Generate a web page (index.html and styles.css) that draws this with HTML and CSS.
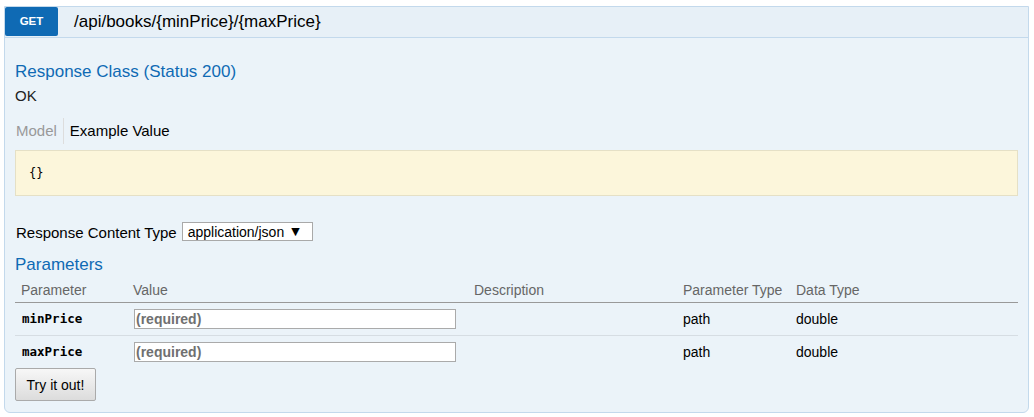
FILE: index.html
```html
<!DOCTYPE html>
<html lang="en">
<head>
<meta charset="utf-8">
<title>GET /api/books/{minPrice}/{maxPrice}</title>
<link rel="stylesheet" href="styles.css">
</head>
<body>
<div class="op">
  <div class="op-head">
    <span class="verb">GET</span>
    <span class="path">/api/books/{minPrice}/{maxPrice}</span>
  </div>
  <div class="op-body">
    <h4 class="sec-title">Response Class (Status 200)</h4>
    <div class="desc">OK</div>
    <div class="tabs">
      <span class="tab tab-off">Model</span>
      <span class="tab tab-on">Example Value</span>
    </div>
    <pre class="sample">{}</pre>
    <div class="ctype">
      <span class="ctype-label">Response Content Type</span>
      <span class="select">application/json<span class="caret">▼</span></span>
    </div>
    <h4 class="sec-title params-title">Parameters</h4>
    <table class="params">
      <colgroup>
        <col class="c1"><col class="c2"><col class="c3"><col class="c4"><col class="c5">
      </colgroup>
      <thead>
        <tr><th>Parameter</th><th>Value</th><th>Description</th><th>Parameter Type</th><th>Data Type</th></tr>
      </thead>
      <tbody>
        <tr>
          <td class="pname">minPrice</td>
          <td><input class="pinput" type="text" placeholder="(required)"></td>
          <td></td>
          <td>path</td>
          <td>double</td>
        </tr>
        <tr>
          <td class="pname">maxPrice</td>
          <td><input class="pinput" type="text" placeholder="(required)"></td>
          <td></td>
          <td>path</td>
          <td>double</td>
        </tr>
      </tbody>
    </table>
    <button class="try" type="button">Try it out!</button>
  </div>
</div>
</body>
</html>
```
FILE: styles.css
```css
html, body {
  margin: 0;
  padding: 0;
  background: #ffffff;
}
body {
  font-family: "Liberation Sans", Arial, sans-serif;
  color: #000;
}
.op {
  margin: 6px 5px 0 4px;
  border: 1px solid #c3d9ec;
  border-radius: 0 0 6px 6px;
  background: #ebf3f9;
}
.op-head {
  display: flex;
  height: 30px;
  background: #e7f0f7;
  border-bottom: 1px solid #c3d9ec;
}
.verb {
  width: 53px;
  height: 29px;
  background: #0f6ab4;
  color: #fff;
  border-radius: 2px;
  font-size: 11.5px;
  font-weight: bold;
  line-height: 29px;
  text-align: center;
}
.path {
  padding-left: 16px;
  font-size: 17px;
  line-height: 30px;
  color: #000;
}
.op-body {
  padding: 24px 10px 11px 10px;
}
.sec-title {
  margin: 0;
  font-size: 17px;
  font-weight: normal;
  line-height: 20px;
  color: #0f6ab4;
}
.desc {
  margin-top: 4px;
  font-size: 15px;
  line-height: 20px;
  color: #222;
}
.tabs {
  display: flex;
  margin-top: 12px;
  height: 26px;
}
.tab {
  font-size: 15px;
  line-height: 26px;
}
.tab-off {
  color: #999;
  padding: 0 6px 0 1px;
  border-right: 1px solid #ddd;
}
.tab-on {
  color: #000;
  padding-left: 6px;
}
.sample {
  margin: 6px 0 0;
  padding: 14px 13px;
  background: #fcf6db;
  border: 1px solid #e5e0c6;
  font-family: "DejaVu Sans Mono", "Liberation Mono", monospace;
  font-size: 12px;
  line-height: 16px;
  color: #000;
}
.ctype {
  display: flex;
  align-items: flex-end;
  gap: 5px;
  margin-top: 26px;
  height: 19px;
}
.ctype-label {
  font-size: 15px;
  line-height: 17px;
  padding-left: 1px;
  color: #000;
}
.select {
  display: flex;
  align-items: center;
  box-sizing: border-box;
  height: 19px;
  width: 131px;
  padding: 0 0 0 5px;
  background: #fff;
  border: 1px solid #a9a9a9;
  font-size: 14px;
  color: #000;
}
.caret {
  margin-left: 7px;
  font-size: 11px;
  font-family: "DejaVu Sans", sans-serif;
}
.params-title {
  margin-top: 14px;
}
.params {
  width: 100%;
  margin-top: 4px;
  border-collapse: collapse;
  table-layout: fixed;
  font-size: 14px;
}
.c1 { width: 112px; }
.c2 { width: 341px; }
.c3 { width: 209px; }
.c4 { width: 113px; }
.params th {
  text-align: left;
  font-weight: normal;
  color: #666;
  line-height: 18px;
  padding: 2px 6px 3px;
  border-bottom: 1px solid #999;
}
.params td {
  padding: 6px;
  line-height: 20px;
  vertical-align: middle;
  color: #000;
}
.params tbody tr + tr td {
  border-top: 1px solid #d6dde3;
}
.pname {
  font-family: "DejaVu Sans Mono", "Liberation Mono", monospace;
  font-weight: bold;
  font-size: 12.5px;
  padding-left: 7px !important;
}
.pinput {
  display: block;
  box-sizing: border-box;
  width: 322px;
  height: 20px;
  margin: 0 0 0 1px;
  padding: 0 1px;
  border: 1px solid #aaa;
  background: #fff;
  font-family: "Liberation Sans", Arial, sans-serif;
  font-weight: bold;
  font-size: 14px;
}
.pinput::placeholder {
  color: #707070;
  opacity: 1;
}
.try {
  display: block;
  box-sizing: border-box;
  width: 81px;
  height: 33px;
  padding: 0;
  border: 1px solid #aaa;
  border-radius: 2px;
  background: linear-gradient(#f7f7f7, #dcdcdc);
  font-family: "Liberation Sans", Arial, sans-serif;
  font-size: 14px;
  color: #000;
}
```
